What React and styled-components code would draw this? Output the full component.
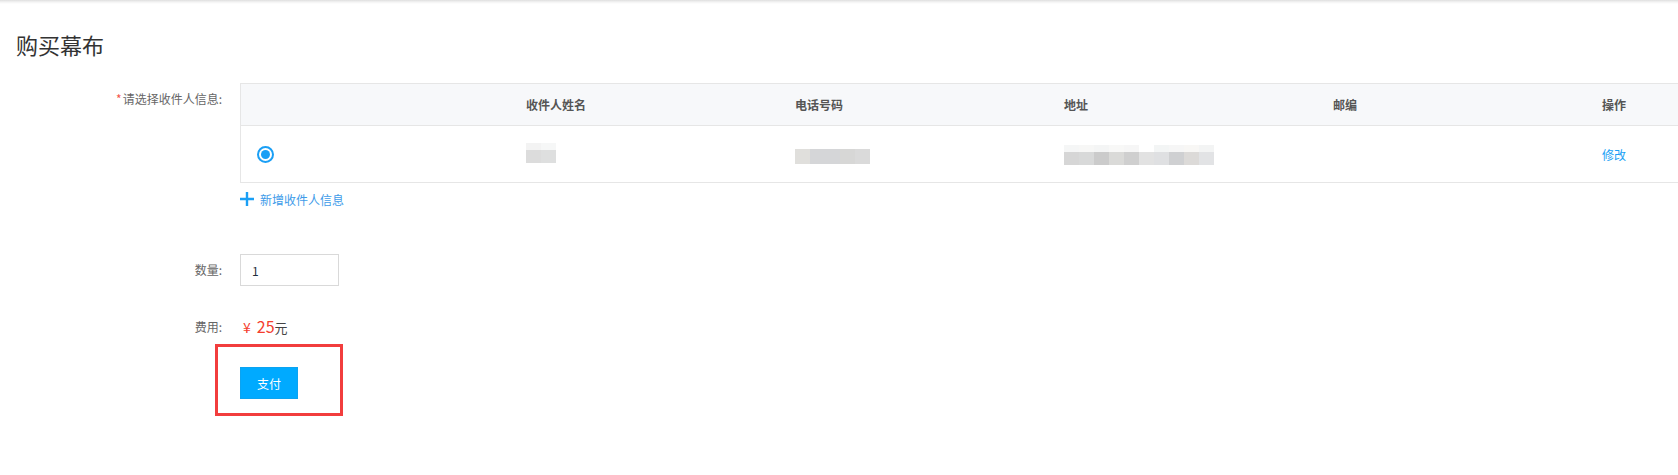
import styled, { createGlobalStyle } from "styled-components";

const GlobalStyle = createGlobalStyle`
  html, body {
    margin: 0;
    padding: 0;
    background: #fff;
    overflow: hidden;
  }
  body {
    font-family: "Noto Sans CJK SC", "Noto Sans", sans-serif;
    color: #333;
  }
`;

const TopShadow = styled.div`
  height: 4px;
  background: linear-gradient(#dedede, #f3f3f3 50%, #fff);
`;

const Viewport = styled.div`
  width: 100%;
  overflow: hidden;
`;

const Page = styled.div`
  padding: 25px 0 60px 16px;
`;

const Title = styled.h2`
  margin: 0 0 24px;
  font-size: 22px;
  font-weight: 400;
  line-height: 30px;
  color: #333;
`;

const FormRow = styled.div`
  display: flex;
  align-items: ${(p) => (p.$top ? "flex-start" : "center")};
  margin-top: ${(p) => p.$gap || 0}px;
  margin-left: -16px;
`;

const Label = styled.div`
  width: 222px;
  flex: none;
  margin-right: 18px;
  text-align: right;
  font-size: 12px;
  color: #666;
  line-height: ${(p) => (p.$tall ? "32px" : "20px")};
`;

const Star = styled.span`
  color: #f5554a;
  margin-right: 1px;
`;

const Table = styled.div`
  flex: none;
  border: 1px solid #e6e6e6;
  border-right: none;
`;

const Row = styled.div`
  display: grid;
  grid-template-columns: repeat(6, 269px);
  align-items: center;
  height: ${(p) => (p.$head ? 41 : 56)}px;
  background: ${(p) => (p.$head ? "#f7f8fa" : "#fff")};
  border-top: ${(p) => (p.$head ? "none" : "1px solid #e6e6e6")};
`;

const Cell = styled.div`
  padding-left: 16px;
  font-size: 12px;
  color: #555;
  font-weight: ${(p) => (p.$head ? 700 : 400)};
  display: flex;
  align-items: center;
`;

const Radio = styled.span`
  width: 13px;
  height: 13px;
  border: 2px solid #1a9ff5;
  border-radius: 50%;
  display: flex;
  align-items: center;
  justify-content: center;
  margin-top: 1px;

  &::after {
    content: "";
    width: 9px;
    height: 9px;
    border-radius: 50%;
    background: #1a9ff5;
  }
`;

const Blur = styled.div`
  display: flex;
  flex-direction: column;
  margin-top: ${(p) => p.$shift || 0}px;
`;

const BlurLine = styled.div`
  display: flex;
  height: ${(p) => p.$h}px;
`;

const Pixel = styled.span`
  width: 15px;
  height: 100%;
  background: ${(p) => p.$c};
`;

const Link = styled.a`
  color: #1a9ff5;
  font-size: 12px;
  cursor: pointer;
  text-decoration: none;
`;

const AddLink = styled.div`
  display: flex;
  align-items: center;
  gap: 6px;
  height: 20px;
  font-size: 12px;
  color: #3d9be9;
  cursor: pointer;
`;

const Input = styled.input`
  box-sizing: border-box;
  width: 99px;
  height: 32px;
  border: 1px solid #d9d9d9;
  padding: 0 11px;
  font-family: inherit;
  font-size: 12px;
  color: #1f2d3d;
  outline: none;
`;

const Price = styled.div`
  display: flex;
  align-items: baseline;
  line-height: 20px;
  padding-left: 3px;
`;

const Money = styled.span`
  color: #f43e2e;
  font-size: ${(p) => (p.$big ? 16 : 14)}px;
  margin-right: ${(p) => (p.$big ? 0 : 6)}px;
`;

const Unit = styled.span`
  color: #444;
  font-size: 13px;
`;

const Highlight = styled.div`
  position: relative;
`;

const HighlightFrame = styled.span`
  position: absolute;
  left: -25px;
  top: -23px;
  right: -45px;
  bottom: -17px;
  border: 3px solid #f23d3d;
  pointer-events: none;
`;

const PayButton = styled.button`
  display: block;
  width: 58px;
  height: 32px;
  border: 1px solid #0ca3f0;
  background: #00aaff;
  color: #fff;
  font-family: inherit;
  font-size: 12px;
  padding: 0;
  cursor: pointer;
`;

const blurData = {
  name: {
    top: ["#f3f3f3", "#f6f7f7"],
    bottom: ["#dcdcdc", "#dedfdf"],
  },
  phone: {
    top: [],
    bottom: ["#e0dfdc", "#d5d6d8", "#d5d6d8", "#d7d7d6", "#dadada"],
  },
  address: {
    top: ["#f5f6f6", "#f7f7f6", "#f4f5f5", "#f8f8f7", "#f6f6f6", "#fff", "#f3f5f5", "#f6f6f6", "#f8f7f5", "#f3f4f4"],
    bottom: ["#d6d6d6", "#d8d9d9", "#cbcbcb", "#dadad8", "#cfcfcf", "#e2e2e2", "#dfe0e2", "#cfd0d2", "#dcdad8", "#e2e3e5"],
  },
};

const Blurred = ({ data, shift }) => (
  <Blur $shift={shift}>
    {data.top.length > 0 && (
      <BlurLine $h={7}>
        {data.top.map((c, i) => (
          <Pixel key={i} $c={c} />
        ))}
      </BlurLine>
    )}
    <BlurLine $h={data.top.length > 0 ? 13 : 15}>
      {data.bottom.map((c, i) => (
        <Pixel key={i} $c={c} />
      ))}
    </BlurLine>
  </Blur>
);

const PlusIcon = () => (
  <svg width="14" height="14" viewBox="0 0 14 14">
    <path d="M7 0v14M0 7h14" stroke="#1a9ff5" strokeWidth="2.4" />
  </svg>
);

const headers = ["", "收件人姓名", "电话号码", "地址", "邮编", "操作"];

const App = () => {
  return (
    <>
      <GlobalStyle />
      <TopShadow />
      <Viewport>
        <Page>
          <Title>购买幕布</Title>

          <FormRow $top>
            <Label $tall>
              <Star>*</Star>请选择收件人信息:
            </Label>
            <Table>
              <Row $head>
                {headers.map((h, i) => (
                  <Cell key={i} $head>
                    {h}
                  </Cell>
                ))}
              </Row>
              <Row>
                <Cell>
                  <Radio />
                </Cell>
                <Cell>
                  <Blurred data={blurData.name} shift={-2} />
                </Cell>
                <Cell>
                  <Blurred data={blurData.phone} shift={5} />
                </Cell>
                <Cell>
                  <Blurred data={blurData.address} shift={1} />
                </Cell>
                <Cell />
                <Cell>
                  <Link>修改</Link>
                </Cell>
              </Row>
            </Table>
          </FormRow>

          <FormRow $gap={6}>
            <Label />
            <AddLink>
              <PlusIcon />
              新增收件人信息
            </AddLink>
          </FormRow>

          <FormRow $gap={45}>
            <Label>数量:</Label>
            <Input defaultValue="1" />
          </FormRow>

          <FormRow $gap={30}>
            <Label>费用:</Label>
            <Price>
              <Money>¥</Money>
              <Money $big>25</Money>
              <Unit>元</Unit>
            </Price>
          </FormRow>

          <FormRow $gap={29}>
            <Label />
            <Highlight>
              <PayButton>支付</PayButton>
              <HighlightFrame />
            </Highlight>
          </FormRow>
        </Page>
      </Viewport>
    </>
  );
};

export default App;
